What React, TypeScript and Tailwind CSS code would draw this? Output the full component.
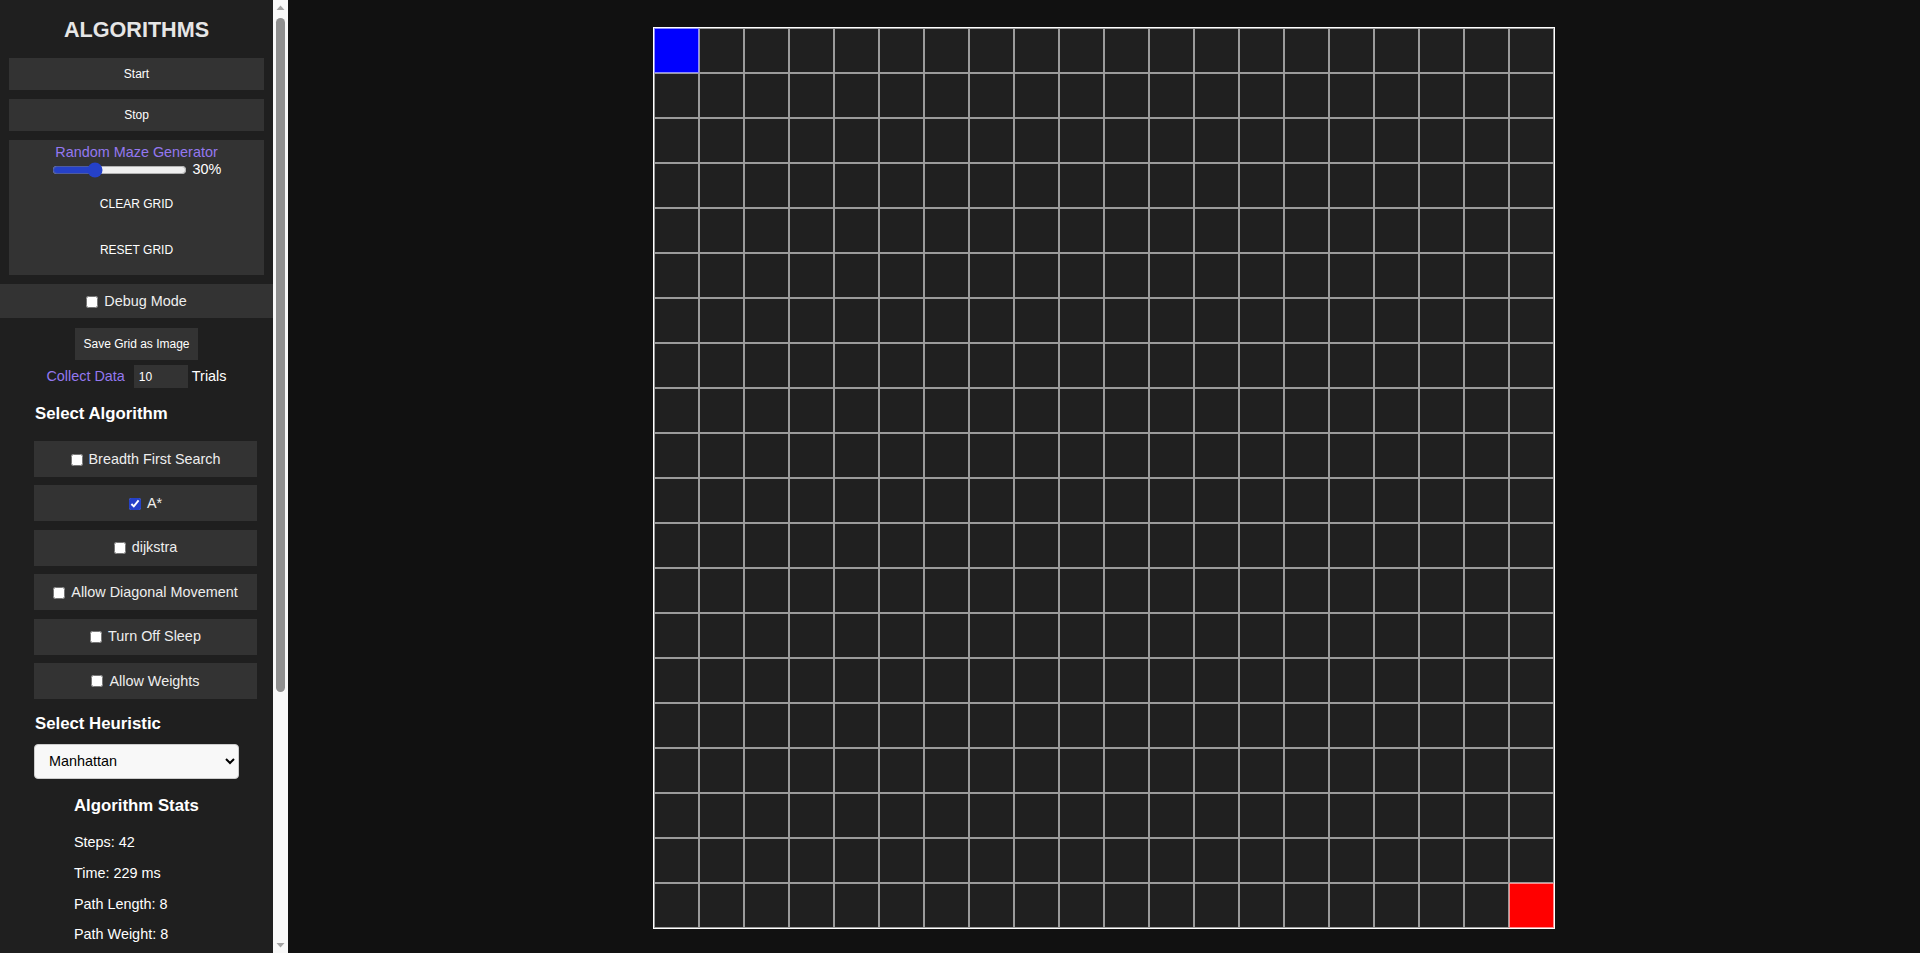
import { useState } from "react";

const ALGOS = [
  { name: "Breadth First Search", checked: false },
  { name: "A*", checked: true },
  { name: "dijkstra", checked: false },
  { name: "Allow Diagonal Movement", checked: false },
  { name: "Turn Off Sleep", checked: false },
  { name: "Allow Weights", checked: false },
];

const SIZE = 20;

const Cell = ({ index }: { index: number }) => {
  let bg = "bg-[#202020]";
  if (index === 0) bg = "bg-[#0000ff]";
  if (index === SIZE * SIZE - 1) bg = "bg-[#ff0000]";
  return <div className={`w-[45px] h-[45px] border border-white/55 ${bg}`} />;
};

// classic scrollbar look for the sidebar
const ScrollTrack = () => (
  <div className="w-[15px] h-[953px] flex-none bg-[#f8f8f8] flex flex-col items-center">
    <svg width="9" height="15" viewBox="0 0 9 15" className="flex-none">
      <path d="M0.5 10 L4.5 5.5 L8.5 10 Z" fill="#a3a3a3" />
    </svg>
    <div className="mt-[3px] w-[9px] h-[674px] rounded-full bg-[#8f8f8f]" />
    <div className="flex-1" />
    <svg width="9" height="15" viewBox="0 0 9 15" className="flex-none">
      <path d="M0.5 5 L4.5 9.5 L8.5 5 Z" fill="#a3a3a3" />
    </svg>
  </div>
);

export default function App() {
  const [density, setDensity] = useState(30);
  const [trials, setTrials] = useState("10");
  const [algos, setAlgos] = useState(ALGOS.map((a) => a.checked));
  const [debug, setDebug] = useState(false);

  return (
    <div className="flex h-[953px] w-full bg-[#111111] font-['Liberation_Sans',Arial,sans-serif] overflow-hidden">
      <aside className="w-[273px] h-[953px] flex-none overflow-hidden bg-[#1f1f1f] text-white">
        <div className="w-[273px] pb-[360px]">
          <h2 className="pt-[17px] text-center text-[21.6px] leading-[25px] font-bold text-[#e6e6e6]">
            ALGORITHMS
          </h2>

          <div className="mt-[16px] flex flex-col gap-[9px] px-[9px]">
            <button className="h-[32px] bg-[#333333] text-[12px] text-white">Start</button>
            <button className="h-[32px] bg-[#333333] text-[12px] text-white">Stop</button>

            <div className="h-[135px] bg-[#333333] flex flex-col items-center pt-[4px]">
              <span className="text-[14.4px] leading-[17px] text-[#9478f0]">Random Maze Generator</span>
              <div className="flex items-center h-[18px] gap-[6px]">
                <input
                  type="range"
                  min={0}
                  max={100}
                  value={density}
                  onChange={(e) => setDensity(Number(e.target.value))}
                  className="w-[135px] accent-[#2541c8]"
                />
                <span className="text-[14.4px] text-white">{density}%</span>
              </div>
              <button className="mt-[7px] h-[36px] px-[8px] text-[12px] text-white">CLEAR GRID</button>
              <button className="mt-[10px] h-[36px] px-[8px] text-[12px] text-white">RESET GRID</button>
            </div>
          </div>

          <label className="mt-[9px] h-[34px] pt-[2px] bg-[#333333] flex items-center justify-center text-[14.4px] text-[#eeeeee]">
            <input
              type="checkbox"
              checked={debug}
              onChange={() => setDebug(!debug)}
              className="w-[12px] h-[12px] mr-[6px] accent-[#2541c8]"
            />
            Debug Mode
          </label>

          <div className="mt-[10px] flex justify-center">
            <button className="h-[32px] w-[123px] bg-[#333333] text-[12px] text-white">Save Grid as Image</button>
          </div>

          <div className="mt-[5px] flex items-center justify-center text-[14.4px]">
            <span className="text-[#9478f0]">Collect Data</span>
            <input
              value={trials}
              onChange={(e) => setTrials(e.target.value)}
              className="ml-[9px] w-[54px] h-[23px] bg-[#333333] pl-[5px] text-[12px] text-white outline-none"
            />
            <span className="ml-[4px] text-white">Trials</span>
          </div>

          <h3 className="mt-[16px] ml-[35px] text-[16.8px] leading-[19px] font-bold text-white">Select Algorithm</h3>

          <div className="mt-[18px] ml-[34px] w-[223px] flex flex-col gap-[8.4px]">
            {ALGOS.map((a, i) => (
              <label
                key={a.name}
                className="h-[36px] pt-[1px] bg-[#333333] flex items-center justify-center text-[14.4px] text-[#eeeeee]"
              >
                <input
                  type="checkbox"
                  checked={algos[i]}
                  onChange={() => setAlgos(algos.map((v, j) => (j === i ? !v : v)))}
                  className="w-[12px] h-[12px] mr-[6px] accent-[#2541c8]"
                />
                {a.name}
              </label>
            ))}
          </div>

          <h3 className="mt-[15px] ml-[35px] text-[16.8px] leading-[19px] font-bold text-white">Select Heuristic</h3>

          <select className="mt-[11px] ml-[34px] w-[205px] h-[35px] bg-[#f8f8f8] text-black text-[14.4px] border border-[#cccccc] rounded-[4px] pl-[10px] pr-[6px]">
            <option>Manhattan</option>
            <option>Euclidean</option>
            <option>Chebyshev</option>
          </select>

          <div className="pl-[74px] text-[14.4px] text-white">
            <h3 className="mt-[17px] text-[16.8px] leading-[19px] font-bold">Algorithm Stats</h3>
            <p className="mt-[19px] leading-[17px]">Steps: 42</p>
            <p className="mt-[14px] leading-[17px]">Time: 229 ms</p>
            <p className="mt-[14px] leading-[17px]">Path Length: 8</p>
            <p className="mt-[13px] leading-[17px]">Path Weight: 8</p>
          </div>
        </div>
      </aside>
      <ScrollTrack />

      <main className="flex-1 flex justify-center pt-[27px]">
        <div className="self-start border border-white grid grid-cols-[repeat(20,45px)]">
          {Array.from({ length: SIZE * SIZE }, (_, i) => (
            <Cell key={i} index={i} />
          ))}
        </div>
      </main>
    </div>
  );
}
